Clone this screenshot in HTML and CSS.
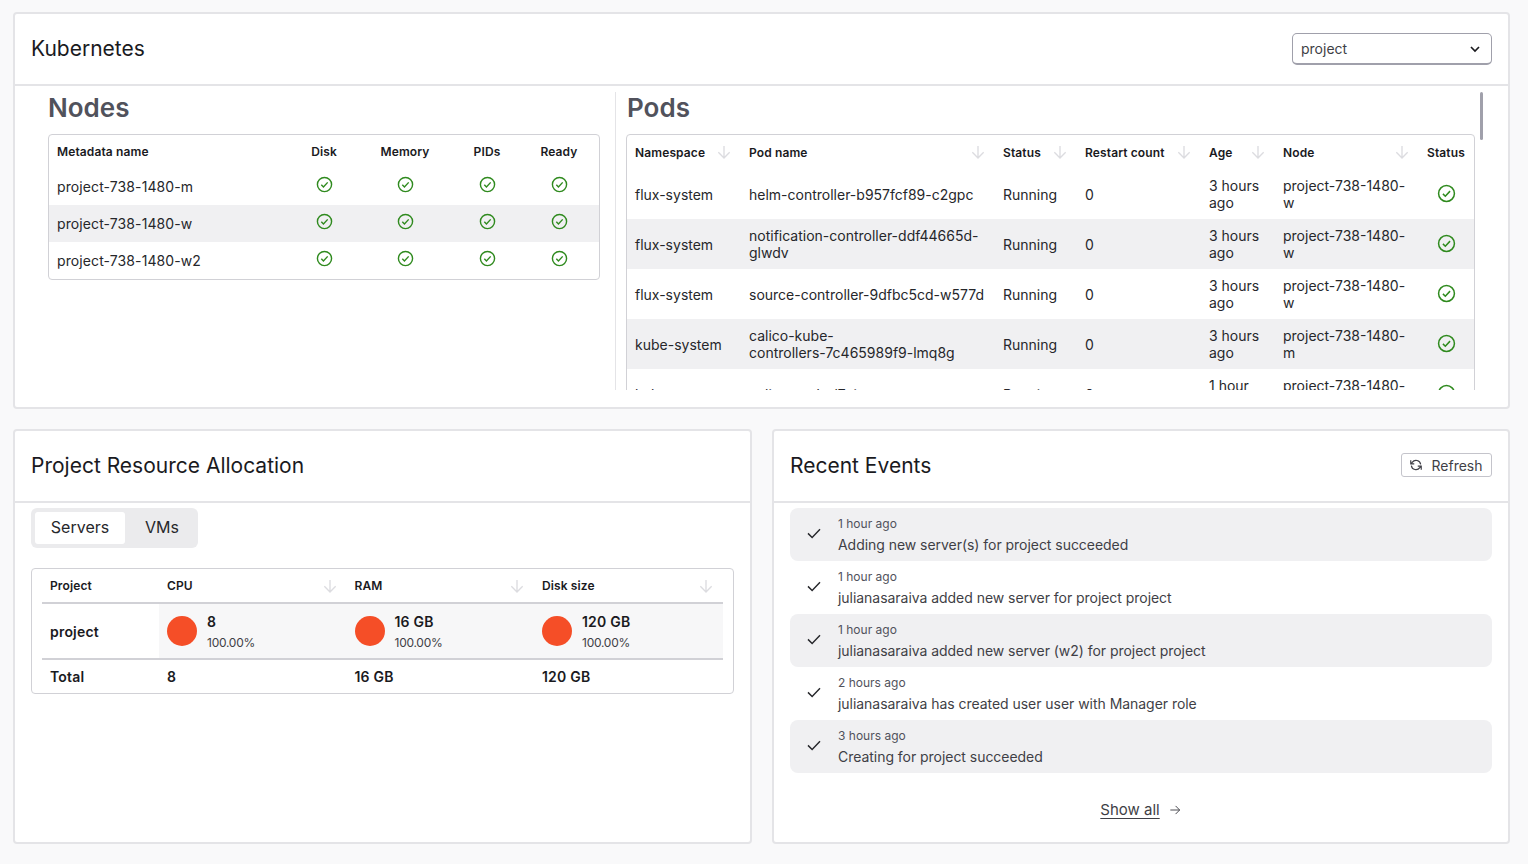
FILE: index.html
```html
<!DOCTYPE html>
<html lang="en">
<head>
    <meta charset="UTF-8">
    <meta name="viewport" content="width=device-width, initial-scale=1.0">
    <title>Project dashboard</title>
    <link rel="stylesheet" href="styles.css">
</head>
<body>

    <svg class="sprites" width="0" height="0">
        <symbol id="ok" viewBox="0 0 24 24"><circle cx="12" cy="12" r="10"/><path d="M7.5 12.5l3 3 6-6.500"/></symbol>
        <symbol id="down" viewBox="0 0 24 24"><path d="M12 3v18M3.500 12.500L12 21l8.500-8.500"/></symbol>
        <symbol id="tick" viewBox="0 0 24 24"><path d="M4 12.500l5.500 5.500L20 7"/></symbol>
    </svg>

    <section class="card kube">
        <header class="card-head">
            <h2>Kubernetes</h2>
            <div class="select">
                <span>project</span>
                <svg class="chevron" viewBox="0 0 24 24"><path d="M6 9l6 6 6-6"/></svg>
            </div>
        </header>
        <div class="kube-body">
            <div class="nodes">
                <h3>Nodes</h3>
                <div class="table-box">
                    <table class="nodes-table">
                        <colgroup><col class="c-name"><col class="c-disk"><col class="c-mem"><col class="c-pids"><col class="c-ready"></colgroup>
                        <tr><th>Metadata name</th><th class="mid">Disk</th><th class="mid">Memory</th><th class="mid">PIDs</th><th class="mid">Ready</th></tr>
                        <tr>
                            <td>project-738-1480-m</td>
                            <td class="mid"><svg class="ok"><use href="#ok"/></svg></td>
                            <td class="mid"><svg class="ok"><use href="#ok"/></svg></td>
                            <td class="mid"><svg class="ok"><use href="#ok"/></svg></td>
                            <td class="mid"><svg class="ok"><use href="#ok"/></svg></td>
                        </tr>
                        <tr class="stripe">
                            <td>project-738-1480-w</td>
                            <td class="mid"><svg class="ok"><use href="#ok"/></svg></td>
                            <td class="mid"><svg class="ok"><use href="#ok"/></svg></td>
                            <td class="mid"><svg class="ok"><use href="#ok"/></svg></td>
                            <td class="mid"><svg class="ok"><use href="#ok"/></svg></td>
                        </tr>
                        <tr>
                            <td>project-738-1480-w2</td>
                            <td class="mid"><svg class="ok"><use href="#ok"/></svg></td>
                            <td class="mid"><svg class="ok"><use href="#ok"/></svg></td>
                            <td class="mid"><svg class="ok"><use href="#ok"/></svg></td>
                            <td class="mid"><svg class="ok"><use href="#ok"/></svg></td>
                        </tr>
                    </table>
                </div>
            </div>
            <div class="pods">
                <h3>Pods</h3>
                <div class="table-box">
                    <table class="pods-table">
                        <colgroup><col class="p-ns"><col class="p-pod"><col class="p-status"><col class="p-restart"><col class="p-age"><col class="p-node"><col class="p-ok"></colgroup>
                        <tr>
                            <th><div class="sort">Namespace<svg class="arrow"><use href="#down"/></svg></div></th>
                            <th><div class="sort">Pod name<svg class="arrow"><use href="#down"/></svg></div></th>
                            <th><div class="sort">Status<svg class="arrow"><use href="#down"/></svg></div></th>
                            <th><div class="sort">Restart count<svg class="arrow"><use href="#down"/></svg></div></th>
                            <th><div class="sort">Age<svg class="arrow"><use href="#down"/></svg></div></th>
                            <th><div class="sort">Node<svg class="arrow"><use href="#down"/></svg></div></th>
                            <th>Status</th>
                        </tr>
                        <tr>
                            <td>flux-system</td><td>helm-controller-b957fcf89-c2gpc</td><td>Running</td><td>0</td><td>3 hours ago</td><td>project-738-1480-w</td>
                            <td class="mid"><svg class="ok big"><use href="#ok"/></svg></td>
                        </tr>
                        <tr class="stripe">
                            <td>flux-system</td><td>notification-controller-ddf44665d-glwdv</td><td>Running</td><td>0</td><td>3 hours ago</td><td>project-738-1480-w</td>
                            <td class="mid"><svg class="ok big"><use href="#ok"/></svg></td>
                        </tr>
                        <tr>
                            <td>flux-system</td><td>source-controller-9dfbc5cd-w577d</td><td>Running</td><td>0</td><td>3 hours ago</td><td>project-738-1480-w</td>
                            <td class="mid"><svg class="ok big"><use href="#ok"/></svg></td>
                        </tr>
                        <tr class="stripe">
                            <td>kube-system</td><td>calico-kube-<br>controllers-7c465989f9-lmq8g</td><td>Running</td><td>0</td><td>3 hours ago</td><td>project-738-1480-m</td>
                            <td class="mid"><svg class="ok big"><use href="#ok"/></svg></td>
                        </tr>
                        <tr>
                            <td>kube-system</td><td>calico-node-l7zjx</td><td>Running</td><td>0</td><td>1 hour ago</td><td>project-738-1480-w</td>
                            <td class="mid"><svg class="ok big"><use href="#ok"/></svg></td>
                        </tr>
                    </table>
                </div>
            </div>
            <div class="scroll-thumb"></div>
        </div>
    </section>

    <div class="lower">
        <section class="card">
            <header class="card-head">
                <h2>Project Resource Allocation</h2>
            </header>
            <div class="alloc-body">
                <div class="tabs">
                    <span class="tab active">Servers</span>
                    <span class="tab">VMs</span>
                </div>
                <div class="alloc-box">
                    <table class="alloc-table">
                        <colgroup><col class="a-name"><col class="a-col"><col class="a-col"><col></colgroup>
                        <tr>
                            <th>Project</th>
                            <th><div class="sort">CPU<svg class="arrow"><use href="#down"/></svg></div></th>
                            <th><div class="sort">RAM<svg class="arrow"><use href="#down"/></svg></div></th>
                            <th><div class="sort">Disk size<svg class="arrow"><use href="#down"/></svg></div></th>
                        </tr>
                        <tr class="alloc-row">
                            <td class="strong">project</td>
                            <td class="use"><div class="usage"><span class="dot"></span><div class="usage-text"><div class="amount">8</div><div class="pct">100.00%</div></div></div></td>
                            <td class="use"><div class="usage"><span class="dot"></span><div class="usage-text"><div class="amount">16 GB</div><div class="pct">100.00%</div></div></div></td>
                            <td class="use"><div class="usage"><span class="dot"></span><div class="usage-text"><div class="amount">120 GB</div><div class="pct">100.00%</div></div></div></td>
                        </tr>
                        <tr class="total">
                            <td>Total</td><td>8</td><td>16 GB</td><td>120 GB</td>
                        </tr>
                    </table>
                </div>
            </div>
        </section>

        <section class="card">
            <header class="card-head">
                <h2>Recent Events</h2>
                <button class="refresh">
                    <svg class="refresh-icon" viewBox="0 0 24 24"><path d="M20 11a8 8 0 0 0-14.500-3.500L3 10M3 4v6h6M4 13a8 8 0 0 0 14.500 3.500L21 14M21 20v-6h-6"/></svg>
                    Refresh
                </button>
            </header>
            <div class="events">
                <div class="event stripe">
                    <svg class="tick"><use href="#tick"/></svg>
                    <div><div class="when">1 hour ago</div><div class="what">Adding new server(s) for project succeeded</div></div>
                </div>
                <div class="event">
                    <svg class="tick"><use href="#tick"/></svg>
                    <div><div class="when">1 hour ago</div><div class="what">julianasaraiva added new server for project project</div></div>
                </div>
                <div class="event stripe">
                    <svg class="tick"><use href="#tick"/></svg>
                    <div><div class="when">1 hour ago</div><div class="what">julianasaraiva added new server (w2) for project project</div></div>
                </div>
                <div class="event">
                    <svg class="tick"><use href="#tick"/></svg>
                    <div><div class="when">2 hours ago</div><div class="what">julianasaraiva has created user user with Manager role</div></div>
                </div>
                <div class="event stripe">
                    <svg class="tick"><use href="#tick"/></svg>
                    <div><div class="when">3 hours ago</div><div class="what">Creating for project succeeded</div></div>
                </div>
                <div class="show-all">
                    <a href="#">Show all</a>
                    <svg class="show-arrow" viewBox="0 0 24 24"><path d="M4 12h16M13 5l7 7-7 7"/></svg>
                </div>
            </div>
        </section>
    </div>

</body>
</html>
```

FILE: styles.css
```css
* { box-sizing: border-box; }
body { margin: 0; padding: 12px 18px 0 13px; height: 864px; overflow: hidden; background-color: #f9f9fa; font-family: Inter, "Noto Sans", sans-serif; color: #26272b; font-size: 14px; }
.sprites { position: absolute; }

.card { background: white; border: 2px solid #e4e4e7; border-radius: 4px; }
.card-head { height: 72px; padding: 0 16px; display: flex; align-items: center; justify-content: space-between; border-bottom: 2px solid #e4e4e7; }
.card-head h2 { margin: 0 0 2px; font-size: 21px; font-weight: 400; color: #1a1a1e; }

.kube { height: 397px; }
.select { width: 200px; height: 32px; padding: 0 8px; display: flex; align-items: center; justify-content: space-between; border: 1px solid #a0a0ab; border-bottom-width: 2px; border-radius: 5px; color: #3f3f46; }
.chevron { width: 16px; height: 16px; fill: none; stroke: #1a1a1e; stroke-width: 2.5; }

.kube-body { position: relative; height: 304px; padding-top: 6px; display: flex; }
.nodes { width: 600px; padding: 0 15px 0 33px; }
.pods { width: 870px; height: 298px; padding-left: 10px; overflow: hidden; border-left: 1px solid #e4e4e7; }
.scroll-thumb { position: absolute; left: 1465px; top: 6px; width: 3px; height: 48px; background: #a0a0ab; border-radius: 2px; }

h3 { margin: 0 0 10px; height: 32px; line-height: 32px; font-size: 26px; font-weight: 600; color: #51525c; }
.pods h3 { padding-left: 1px; }
.table-box { border: 1px solid #d1d1d6; border-radius: 4px; }
.pods .table-box { width: 849px; }

table { width: 100%; border-collapse: collapse; table-layout: fixed; }
th { padding: 0 8px; font-size: 12px; font-weight: 600; letter-spacing: 0.12px; text-align: left; color: #1a1a1e; }
td { padding: 0 8px; line-height: 17px; }
.mid { text-align: center; }
.stripe { background: #f0f0f2; }
.sort { display: flex; align-items: center; justify-content: space-between; padding-right: 1px; }

.nodes-table tr { height: 37px; }
.nodes-table tr:first-child { height: 33px; }
.nodes-table td { letter-spacing: 0.1px; }
.c-name { width: 244px; }
.c-disk { width: 62px; }
.c-mem { width: 100px; }
.c-pids { width: 64px; }
.c-ready { width: 80px; }

.pods-table tr { height: 50px; }
.pods-table tr:first-child { height: 34px; }
.p-ns { width: 114px; }
.p-pod { width: 254px; }
.p-status { width: 82px; }
.p-restart { width: 124px; }
.p-age { width: 74px; }
.p-node { width: 144px; }
.p-ok { width: 55px; }

.ok { width: 19px; height: 19px; fill: none; stroke: #2f8a1e; stroke-width: 1.9; vertical-align: middle; position: relative; top: -1px; }
.nodes-table .ok { width: 17px; height: 17px; stroke-width: 2; top: -2.5px; }
.arrow { width: 16px; height: 16px; fill: none; stroke: #dcdce0; stroke-width: 2; }

.lower { margin-top: 20px; display: grid; grid-template-columns: 739px 738px; gap: 20px; }
.lower .card { height: 415px; }

.alloc-body { padding: 5px 16px; }
.tabs { width: 167px; height: 40px; padding: 4px; display: flex; background: #ebebed; border-radius: 6px; }
.tab { flex: none; height: 32px; padding: 0 0 0 15px; line-height: 31px; font-size: 16px; color: #26272b; }
.tab.active { width: 90px; padding: 0; text-align: center; background: white; border-radius: 3px; margin-right: 5px; }

.alloc-box { margin-top: 20px; padding: 0 10px; border: 1px solid #d1d1d6; border-radius: 4px; }
.alloc-table tr { height: 34px; }
.alloc-table .alloc-row { height: 56px; border-top: 2px solid #d1d1d6; border-bottom: 2px solid #d1d1d6; }
.a-name { width: 117px; }
.a-col { width: 187.5px; }
.strong, .total td { font-weight: 600; letter-spacing: 0.2px; color: #1a1a1e; }
.use { background: #f7f7f8; }
.usage { display: flex; align-items: center; gap: 10px; }
.usage-text { padding-top: 2px; }
.dot { width: 30px; height: 30px; border-radius: 50%; background: #f54e27; }
.amount { font-weight: 600; letter-spacing: 0.2px; color: #1a1a1e; }
.pct { margin-top: 4px; font-size: 12px; letter-spacing: -0.25px; color: #3f3f46; }

.refresh { height: 24px; width: 91px; margin-bottom: 2px; padding: 0 1px 0 0; display: flex; align-items: center; justify-content: center; gap: 8px; background: white; border: 1px solid #c4c4cb; border-radius: 3px; font-family: inherit; font-size: 14px; color: #3f3f46; }
.refresh-icon { width: 14px; height: 14px; fill: none; stroke: #3f3f46; stroke-width: 2; }

.events { padding: 5px 16px; }
.event { height: 53px; padding-left: 15px; display: flex; align-items: center; gap: 15px; border-radius: 8px; }
.tick { width: 18px; height: 18px; flex: none; fill: none; stroke: #26272b; stroke-width: 1.9; position: relative; top: -2px; }
.when { font-size: 12px; line-height: 16px; color: #51525c; }
.what { margin-top: 4px; line-height: 17px; letter-spacing: -0.04px; color: #3f3f46; }

.show-all { margin-top: 27px; display: flex; align-items: center; justify-content: center; gap: 8px; font-size: 15px; color: #3f3f46; }
.show-all a { color: #3f3f46; text-underline-offset: 3px; }
.show-arrow { width: 14px; height: 14px; fill: none; stroke: #3f3f46; stroke-width: 1.6; }
```
